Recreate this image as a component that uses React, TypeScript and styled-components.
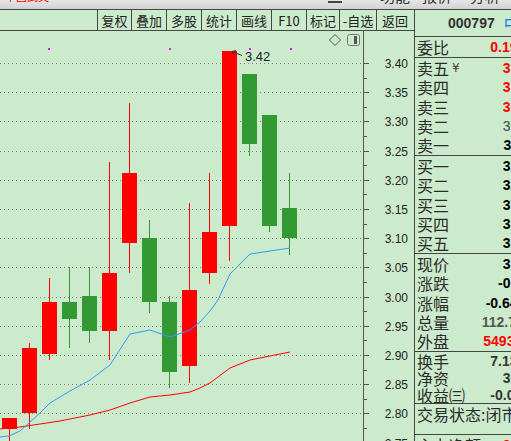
import React from 'react';
import styled, { createGlobalStyle } from 'styled-components';

const BG = '#ccebcc';
const LINE = '#464646';
const RED = '#ff0000';
const GREEN = '#339933';
const BLUE = '#3399ff';

const GlobalStyle = createGlobalStyle`
  html, body {
    margin: 0;
    padding: 0;
    overflow: hidden;
    background: ${BG};
  }
  body {
    font-family: "Noto Sans CJK SC", "Liberation Sans", sans-serif;
  }
`;

// price axis: 3.40 sits at y=63, 0.05 per 29.2px
const priceY = (p: number) => 63 + (3.4 - p) * 584;
const levels = [3.4, 3.35, 3.3, 3.25, 3.2, 3.15, 3.1, 3.05, 3.0, 2.95, 2.9, 2.85, 2.8, 2.75];

// candle coordinates in page pixels (hi, body top, body bottom, lo)
type Candle = { up: boolean; hi: number; top: number; bot: number; lo: number };
const candles: Candle[] = [
  { up: true, hi: 418, top: 418, bot: 429, lo: 445 },
  { up: true, hi: 343, top: 348, bot: 413, lo: 429 },
  { up: true, hi: 278, top: 302, bot: 354, lo: 360 },
  { up: false, hi: 267, top: 302, bot: 319, lo: 348 },
  { up: false, hi: 267, top: 296, bot: 331, lo: 343 },
  { up: true, hi: 162, top: 273, bot: 331, lo: 360 },
  { up: true, hi: 103, top: 173, bot: 243, lo: 273 },
  { up: false, hi: 220, top: 238, bot: 302, lo: 313 },
  { up: false, hi: 296, top: 302, bot: 372, lo: 388 },
  { up: true, hi: 203, top: 290, bot: 366, lo: 383 },
  { up: true, hi: 173, top: 232, bot: 273, lo: 284 },
  { up: true, hi: 51, top: 51, bot: 226, lo: 261 },
  { up: false, hi: 74, top: 74, bot: 144, lo: 156 },
  { up: false, hi: 115, top: 115, bot: 226, lo: 232 },
  { up: false, hi: 173, top: 208, bot: 238, lo: 255 },
];

const ma5: [number, number][] = [
  [0, 437], [9, 436], [20, 431], [29, 423], [40, 413], [50, 403], [70, 391], [90, 380],
  [110, 365], [130, 334], [150, 330], [170, 337], [190, 330], [200, 322], [210, 311],
  [218, 300], [230, 274], [250, 254], [270, 251], [290, 248],
];

const ma10: [number, number][] = [
  [0, 429], [20, 427], [40, 424], [60, 421], [90, 415], [110, 410], [130, 403], [150, 397],
  [170, 395], [190, 392], [200, 388], [210, 383], [230, 368], [250, 360], [270, 356], [290, 352],
];

const marks = [48, 169, 249, 290];

const toolButtons: [string, number][] = [
  ['复权', 34], ['叠加', 35], ['多股', 35], ['统计', 35], ['画线', 35],
  ['F10', 35], ['标记', 33], ['-自选', 37], ['返回', 36],
];

type Quote = { label: string; value: string; color: string; bold?: boolean; yen?: boolean };

const sellRows: Quote[] = [
  { label: '卖五', value: '3.15', color: RED, bold: true, yen: true },
  { label: '卖四', value: '3.14', color: RED, bold: true },
  { label: '卖三', value: '3.13', color: RED, bold: true },
  { label: '卖二', value: '3.12', color: '#444' },
  { label: '卖一', value: '3.11', color: '#000', bold: true },
];

const buyRows: Quote[] = [
  { label: '买一', value: '3.10', color: '#000', bold: true },
  { label: '买二', value: '3.09', color: '#000', bold: true },
  { label: '买三', value: '3.08', color: '#000', bold: true },
  { label: '买四', value: '3.07', color: '#000', bold: true },
  { label: '买五', value: '3.06', color: '#000', bold: true },
];

const priceRows: Quote[] = [
  { label: '现价', value: '3.10', color: '#000', bold: true },
  { label: '涨跌', value: '-0.02', color: '#000', bold: true },
  { label: '涨幅', value: '-0.64%', color: '#000', bold: true },
  { label: '总量', value: '112.7万', color: '#555', bold: true },
  { label: '外盘', value: '549321', color: RED, bold: true },
];

const shareRows: Quote[] = [
  { label: '换手', value: '7.13%', color: '#333', bold: true },
  { label: '净资', value: '3.21', color: '#333', bold: true },
  { label: '收益㈢', value: '-0.023', color: '#333', bold: true },
];

const Screen = styled.div`
  width: 540px;
  height: 441px;
  display: flex;
  flex-direction: column;
  background: ${BG};
`;

const MenuStrip = styled.div`
  height: 9px;
  flex: none;
  display: flex;
  align-items: flex-start;
  overflow: hidden;
  padding-left: 5px;
  background: linear-gradient(#e6e6e6, #d2d2d2);
  border-bottom: 1px solid ${LINE};
`;

const MenuText = styled.span<{ $red?: boolean; $w: number }>`
  width: ${(p) => p.$w}px;
  flex: none;
  margin-top: -12px;
  font-size: ${(p) => (p.$red ? 11 : 15)}px;
  line-height: 16px;
  color: ${(p) => (p.$red ? RED : '#333')};
  white-space: nowrap;
`;

const MenuBar = styled.span`
  width: 14px;
  height: 2px;
  margin-top: 1px;
  margin-right: 38px;
  background: #444;
  flex: none;
`;

const Spacer = styled.span<{ $w: number }>`
  width: ${(p) => p.$w}px;
  flex: none;
`;

const Main = styled.div`
  flex: 1;
  display: flex;
  min-height: 0;
`;

const LeftCol = styled.div`
  width: 414px;
  flex: none;
  display: flex;
  flex-direction: column;
`;

const Toolbar = styled.div`
  height: 20px;
  flex: none;
  display: flex;
  padding-left: 98px;
  border-bottom: 1px solid ${LINE};
`;

const ToolButton = styled.div<{ $w: number; $first?: boolean; $last?: boolean }>`
  width: ${(p) => p.$w}px;
  box-sizing: border-box;
  display: flex;
  align-items: center;
  justify-content: center;
  font-size: 13px;
  color: #222;
  border-left: ${(p) => (p.$first ? `1px solid ${LINE}` : 'none')};
  border-right: ${(p) => (p.$last ? 'none' : `1px solid ${LINE}`)};
  margin-left: ${(p) => (p.$first ? '-1px' : '0')};
  padding-top: 1px;
`;

const ChartRow = styled.div`
  flex: 1;
  display: flex;
`;

const Plot = styled.div`
  position: relative;
  width: 363px;
  flex: none;
`;

const IconTray = styled.div`
  position: absolute;
  top: 3px;
  right: 3px;
  display: flex;
  gap: 6px;
`;

const Axis = styled.div`
  flex: 1;
  border-left: 1px solid #555;
`;

const Panel = styled.div`
  width: 126px;
  flex: none;
  box-sizing: border-box;
  border-left: 1px solid ${LINE};
  display: flex;
  flex-direction: column;
`;

const PanelHeader = styled.div`
  height: 26px;
  flex: none;
  display: flex;
  align-items: center;
  gap: 9px;
  padding-left: 33px;
  border-bottom: 1px solid ${LINE};
  white-space: nowrap;
  overflow: hidden;
`;

const Code = styled.span`
  font-family: "Liberation Sans", sans-serif;
  font-weight: bold;
  font-size: 14px;
  color: #333;
`;

const Name = styled.span`
  font-size: 16px;
  line-height: 1;
  color: #0a78e6;
`;

const Block = styled.div<{ $h?: number }>`
  height: ${(p) => (p.$h ? `${p.$h}px` : 'auto')};
  flex: ${(p) => (p.$h ? 'none' : '1')};
  display: flex;
  flex-direction: column;
  border-bottom: ${(p) => (p.$h ? `1px solid ${LINE}` : 'none')};
`;

const Row = styled.div<{ $fixed?: number }>`
  flex: ${(p) => (p.$fixed ? 'none' : '1')};
  height: ${(p) => (p.$fixed ? `${p.$fixed}px` : 'auto')};
  min-height: 0;
  display: flex;
  align-items: center;
  justify-content: space-between;
  padding: 0 10px 0 2px;
  white-space: nowrap;
  line-height: 1;
`;

const Label = styled.span`
  font-size: 16px;
  line-height: 1;
  color: #2b2b2b;
  display: flex;
  align-items: center;
`;

const Yen = styled.span`
  font-family: "DejaVu Sans", sans-serif;
  font-size: 12px;
  color: #444;
  margin-left: 3px;
`;

const Value = styled.span<{ $color: string; $bold?: boolean }>`
  font-family: "Liberation Sans", "Noto Sans CJK SC", sans-serif;
  font-size: 14px;
  line-height: 1;
  font-weight: ${(p) => (p.$bold ? 'bold' : 'normal')};
  color: ${(p) => p.$color};
`;

const ListIcon = styled.span`
  width: 9px;
  height: 9px;
  margin-left: 4px;
  border: 1px solid #666;
  background: repeating-linear-gradient(#ccebcc 0 1px, #666 1px 2px);
  background-clip: content-box;
  padding: 1px;
  box-sizing: border-box;
`;

function QuoteRow({ q }: { q: Quote }) {
  return (
    <Row>
      <Label>
        {q.label}
        {q.yen && <Yen>¥</Yen>}
      </Label>
      <Value $color={q.color} $bold={q.bold}>
        {q.value}
      </Value>
    </Row>
  );
}

function KChart() {
  const pts = (list: [number, number][]) => list.map(([x, y]) => `${x},${y}`).join(' ');
  return (
    <svg width={363} height={410} viewBox="0 31 363 410" style={{ display: 'block' }}>
      {levels.map((p) => {
        const y = Math.round(priceY(p)) + 0.5;
        return <line key={p} x1={0} x2={361} y1={y} y2={y} stroke="#7f7f7f" strokeDasharray="1 3" />;
      })}
      {marks.map((x) => (
        <rect key={x} x={x} y={48} width={2} height={2} fill="#ff00ff" />
      ))}
      {candles.map((c, i) => {
        const left = 2 + i * 20;
        const fill = c.up ? RED : GREEN;
        return (
          <g key={i} fill={fill}>
            <rect x={left + 7} y={c.hi} width={1} height={c.lo - c.hi} />
            <rect x={left} y={c.top} width={15} height={Math.max(1, c.bot - c.top)} />
          </g>
        );
      })}
      <polyline points={pts(ma10)} fill="none" stroke={RED} strokeWidth={1} />
      <polyline points={pts(ma5)} fill="none" stroke={BLUE} strokeWidth={1} />
      <path d="M242 55.5 L232 51.5 M232 51.5 L236 50.5 M232 51.5 L233.5 54.5" stroke="#333" fill="none" />
      <text x={245} y={61} fontFamily="Liberation Sans, sans-serif" fontSize={13} fill="#222">
        3.42
      </text>
    </svg>
  );
}

function PriceAxis() {
  const minors = levels.slice(0, -1).map((p) => p - 0.025);
  return (
    <svg width={50} height={410} viewBox="364 31 50 410" style={{ display: 'block' }}>
      {levels.map((p) => {
        const y = Math.round(priceY(p)) + 0.5;
        return (
          <g key={p}>
            <line x1={364} x2={369} y1={y} y2={y} stroke="#555" />
            <text x={408} y={y + 4.5} textAnchor="end" fontFamily="Liberation Sans, sans-serif" fontSize={12} fill="#222">
              {p.toFixed(2)}
            </text>
          </g>
        );
      })}
      {minors.map((p) => {
        const y = Math.round(priceY(p)) + 0.5;
        return <line key={p} x1={364} x2={367} y1={y} y2={y} stroke="#555" />;
      })}
    </svg>
  );
}

export default function App() {
  return (
    <Screen>
      <GlobalStyle />
      <MenuStrip>
        <MenuText $red $w={323}>中国武夷</MenuText>
        <MenuBar />
        <MenuText $w={42}>功能</MenuText>
        <MenuText $w={48}>报价</MenuText>
        <MenuText $w={40}>分析</MenuText>
        <Spacer $w={20} />
      </MenuStrip>
      <Main>
        <LeftCol>
          <Toolbar>
            {toolButtons.map(([t, w], i) => (
              <ToolButton key={t} $w={i === 0 ? w + 1 : w} $first={i === 0} $last={i === toolButtons.length - 1}>
                {t}
              </ToolButton>
            ))}
          </Toolbar>
          <ChartRow>
            <Plot>
              <KChart />
              <IconTray>
                <svg width={12} height={12} viewBox="0 0 12 12">
                  <polygon points="6,0.5 11.5,6 6,11.5 0.5,6" fill="none" stroke="#555" />
                </svg>
                <svg width={13} height={12} viewBox="0 0 13 12">
                  <rect x={0.5} y={0.5} width={12} height={11} rx={2} fill="none" stroke="#777" />
                  <rect x={7} y={2} width={3} height={8} fill="#555" />
                </svg>
              </IconTray>
            </Plot>
            <Axis>
              <PriceAxis />
            </Axis>
          </ChartRow>
        </LeftCol>
        <Panel>
          <PanelHeader>
            <Code>000797</Code>
            <Name>中国武夷</Name>
          </PanelHeader>
          <Block $h={20}>
            <QuoteRow q={{ label: '委比', value: '0.19%', color: RED, bold: true }} />
          </Block>
          <Block $h={97}>
            {sellRows.map((q) => (
              <QuoteRow key={q.label} q={q} />
            ))}
          </Block>
          <Block $h={97}>
            {buyRows.map((q) => (
              <QuoteRow key={q.label} q={q} />
            ))}
          </Block>
          <Block $h={97}>
            {priceRows.map((q) => (
              <QuoteRow key={q.label} q={q} />
            ))}
          </Block>
          <Block $h={51}>
            {shareRows.map((q) => (
              <QuoteRow key={q.label} q={q} />
            ))}
          </Block>
          <Block $h={30}>
            <Row $fixed={20}>
              <Label>交易状态:闭市</Label>
            </Row>
          </Block>
          <Block>
            <Row $fixed={20}>
              <Label>
                主力净额
                <ListIcon />
              </Label>
              <Value $color={RED} $bold>
                8.65
              </Value>
            </Row>
          </Block>
        </Panel>
      </Main>
    </Screen>
  );
}
